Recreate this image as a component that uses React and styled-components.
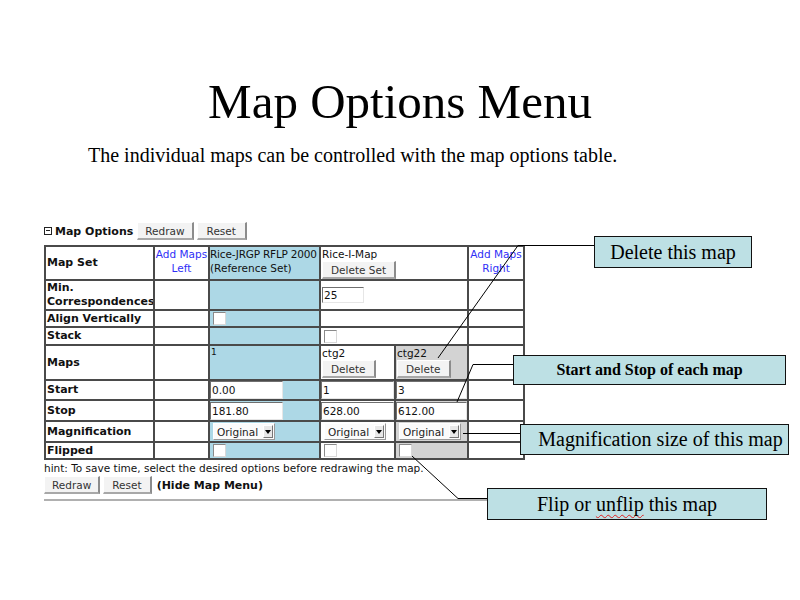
import styled, { createGlobalStyle } from "styled-components";

const GlobalStyle = createGlobalStyle`
  html, body {
    margin: 0;
    padding: 0;
    background: #fff;
  }
`;

const Slide = styled.div`
  position: relative;
  width: 800px;
  height: 600px;
  overflow: hidden;
  background: #fff;
  color: #000;
  font-family: "Liberation Serif", "Times New Roman", serif;
`;

const Title = styled.h1`
  margin: 78px 0 0;
  font-size: 49px;
  font-weight: normal;
  line-height: 48px;
  text-align: center;
`;

const Subtitle = styled.p`
  margin: 19px 0 0 88px;
  font-size: 20px;
  line-height: 20px;
`;

const Panel = styled.div`
  margin: 57px 0 0 44px;
  width: 479px;
  font-family: "DejaVu Sans", sans-serif;
  font-size: 10.5px;
  color: #111;
`;

const PanelHeader = styled.div`
  display: flex;
  align-items: center;
  height: 18px;
`;

const Toggle = styled.span`
  position: relative;
  box-sizing: border-box;
  width: 8px;
  height: 8px;
  border: 1px solid #222;
  margin-right: 3px;

  &::after {
    content: "";
    position: absolute;
    left: 1px;
    right: 1px;
    top: 2px;
    height: 1px;
    background: #222;
  }
`;

const PanelTitle = styled.b`
  font-size: 11px;
  margin-right: 4px;
`;

const Button = styled.button`
  box-sizing: border-box;
  height: ${(p) => p.$h || 18}px;
  margin: 0 ${(p) => p.$gap ?? 3}px 0 0;
  padding: 0 ${(p) => p.$pad ?? 7}px;
  font-family: "DejaVu Sans", sans-serif;
  font-size: 10.5px;
  color: #333;
  background: #f3f3f3;
  border-style: solid;
  border-width: 1px 2px 2px 1px;
  border-color: #fff #8c8c8c #a8a8a8 #fff;
  white-space: nowrap;
`;

const OptionsTable = styled.table`
  margin-top: 5px;
  width: 479px;
  table-layout: fixed;
  border-collapse: separate;
  border-spacing: 0;
  border: 1px solid #4a4a4a;
`;

const Col = styled.col`
  width: ${(p) => p.$w}px;
`;

const Row = styled.tr`
  height: ${(p) => p.$h}px;
`;

const tones = {
  blue: "#add8e6",
  gray: "#d3d3d3",
  white: "#fff",
};

const Cell = styled.td`
  box-sizing: border-box;
  padding: 0 ${(p) => p.$pad ?? 1}px;
  border: 1px solid #4a4a4a;
  background: ${(p) => tones[p.$tone || "white"]};
  vertical-align: ${(p) => p.$valign || "middle"};
  text-align: ${(p) => (p.$center ? "center" : "left")};
  line-height: 14px;
  white-space: nowrap;
  overflow: hidden;
`;

const Label = styled(Cell).attrs({ as: "th" })`
  font-weight: bold;
  font-size: 11px;
  white-space: normal;
`;

const AddLink = styled.span`
  display: block;
  color: #2f2ff6;
  white-space: normal;
`;

const CellText = styled.div`
  font-size: ${(p) => p.$size || 10.5}px;
  line-height: ${(p) => p.$lh || 14}px;
  letter-spacing: ${(p) => p.$tight || 0}px;
`;

const TextBox = styled.input`
  box-sizing: border-box;
  display: block;
  width: ${(p) => p.$w}px;
  height: ${(p) => p.$h || 18}px;
  margin: 0;
  padding: 0 1px;
  font-family: "DejaVu Sans", sans-serif;
  font-size: 10.5px;
  color: #111;
  background: #fff;
  border-style: solid;
  border-width: 1px;
  border-color: #6f6f6f #e6e6e6 #e6e6e6 #6f6f6f;
  outline: none;
`;

const Check = styled.span`
  box-sizing: border-box;
  display: block;
  width: 13px;
  height: 13px;
  margin-left: 2px;
  background: #fff;
  border: 1px solid;
  border-color: #8a8a8a #d8d8d8 #d8d8d8 #8a8a8a;
`;

const Select = styled.span`
  box-sizing: border-box;
  display: flex;
  align-items: center;
  justify-content: space-between;
  width: 62px;
  height: 17px;
  margin-left: 2px;
  padding: 0 1px 0 3px;
  background: #fbfbfb;
  border: 1px solid;
  border-color: #fff #999 #999 #fff;
  font-size: 10.5px;
  color: #222;
`;

const SelectArrow = styled.span`
  display: flex;
  align-items: center;
  justify-content: center;
  box-sizing: border-box;
  width: 10px;
  height: 13px;
  background: #e8e8e8;
  border: 1px solid;
  border-color: #fff #777 #777 #fff;

  &::after {
    content: "";
    border-left: 3px solid transparent;
    border-right: 3px solid transparent;
    border-top: 4px solid #000;
  }
`;

const Hint = styled.div`
  margin-top: 2px;
  line-height: 13px;
`;

const Footer = styled.div`
  display: flex;
  align-items: center;
  margin-top: 1px;
`;

const HideLink = styled.b`
  font-size: 11px;
  margin-left: 2px;
`;

const Rule = styled.div`
  margin-top: 5px;
  height: 2px;
  background: #b0b0b0;
`;

const Leaders = styled.svg`
  position: absolute;
  left: 0;
  top: 0;
  pointer-events: none;
`;

const Callout = styled.div`
  position: absolute;
  left: ${(p) => p.$x}px;
  top: ${(p) => p.$y}px;
  box-sizing: border-box;
  width: ${(p) => p.$w}px;
  height: ${(p) => p.$h}px;
  display: flex;
  align-items: center;
  justify-content: center;
  padding-left: ${(p) => p.$shift || 0}px;
  background: #bde0e4;
  border: 1px solid #111;
  font-size: ${(p) => (p.$bold ? 16 : 20)}px;
  font-weight: ${(p) => (p.$bold ? "bold" : "normal")};
  white-space: nowrap;
`;

const Misspelled = styled.span`
  text-decoration: underline wavy #e02020;
  text-decoration-thickness: 1px;
  text-decoration-skip-ink: none;
  text-underline-offset: 3px;
`;

const MapSelect = () => (
  <Select>
    Original
    <SelectArrow />
  </Select>
);

function App() {
  return (
    <>
      <GlobalStyle />
      <Slide>
        <Title>Map Options Menu</Title>
        <Subtitle>The individual maps can be controlled with the map options table.</Subtitle>

        <Panel>
          <PanelHeader>
            <Toggle />
            <PanelTitle>Map Options</PanelTitle>
            <Button>Redraw</Button>
            <Button $pad={9}>Reset</Button>
          </PanelHeader>

          <OptionsTable>
            <colgroup>
              <Col $w={109} />
              <Col $w={55} />
              <Col $w={111} />
              <Col $w={75} />
              <Col $w={73} />
              <Col $w={56} />
            </colgroup>
            <tbody>
              <Row $h={34}>
                <Label>Map Set</Label>
                <Cell $center $valign="top" $pad={0}>
                  <AddLink>Add Maps Left</AddLink>
                </Cell>
                <Cell $tone="blue" $valign="top" $pad={0}>
                  <CellText $tight={-0.2}>Rice-JRGP RFLP 2000</CellText>
                  <CellText>(Reference Set)</CellText>
                </Cell>
                <Cell colSpan={2} $valign="top">
                  <CellText>Rice-I-Map</CellText>
                  <Button $h={18} $pad={8}>Delete Set</Button>
                </Cell>
                <Cell $center $valign="top" $pad={0}>
                  <AddLink>Add Maps Right</AddLink>
                </Cell>
              </Row>
              <Row $h={30}>
                <Label>Min. Correspondences</Label>
                <Cell />
                <Cell $tone="blue" />
                <Cell colSpan={2}>
                  <TextBox readOnly defaultValue="25" $w={42} $h={16} />
                </Cell>
                <Cell />
              </Row>
              <Row $h={17}>
                <Label>Align Vertically</Label>
                <Cell />
                <Cell $tone="blue">
                  <Check />
                </Cell>
                <Cell colSpan={2} />
                <Cell />
              </Row>
              <Row $h={18}>
                <Label>Stack</Label>
                <Cell />
                <Cell $tone="blue" />
                <Cell colSpan={2}>
                  <Check />
                </Cell>
                <Cell />
              </Row>
              <Row $h={35}>
                <Label>Maps</Label>
                <Cell />
                <Cell $tone="blue" $valign="top">
                  <CellText $size={9} $lh={12}>1</CellText>
                </Cell>
                <Cell $valign="top">
                  <CellText>ctg2</CellText>
                  <Button $pad={8}>Delete</Button>
                </Cell>
                <Cell $tone="gray" $valign="top">
                  <CellText>ctg22</CellText>
                  <Button $pad={8}>Delete</Button>
                </Cell>
                <Cell />
              </Row>
              <Row $h={20}>
                <Label>Start</Label>
                <Cell />
                <Cell $tone="blue" $pad={0}>
                  <TextBox readOnly defaultValue="0.00" $w={73} />
                </Cell>
                <Cell $pad={0}>
                  <TextBox readOnly defaultValue="1" $w={73} />
                </Cell>
                <Cell $tone="gray" $pad={0}>
                  <TextBox readOnly defaultValue="3" $w={71} />
                </Cell>
                <Cell />
              </Row>
              <Row $h={21}>
                <Label>Stop</Label>
                <Cell />
                <Cell $tone="blue" $pad={0}>
                  <TextBox readOnly defaultValue="181.80" $w={73} />
                </Cell>
                <Cell $pad={0}>
                  <TextBox readOnly defaultValue="628.00" $w={73} />
                </Cell>
                <Cell $tone="gray" $pad={0}>
                  <TextBox readOnly defaultValue="612.00" $w={71} />
                </Cell>
                <Cell />
              </Row>
              <Row $h={21}>
                <Label>Magnification</Label>
                <Cell />
                <Cell $tone="blue">
                  <MapSelect />
                </Cell>
                <Cell>
                  <MapSelect />
                </Cell>
                <Cell $tone="gray">
                  <MapSelect />
                </Cell>
                <Cell />
              </Row>
              <Row $h={17}>
                <Label>Flipped</Label>
                <Cell />
                <Cell $tone="blue">
                  <Check />
                </Cell>
                <Cell>
                  <Check />
                </Cell>
                <Cell $tone="gray">
                  <Check />
                </Cell>
                <Cell />
              </Row>
            </tbody>
          </OptionsTable>

          <Hint>hint: To save time, select the desired options before redrawing the map.</Hint>
          <Footer>
            <Button>Redraw</Button>
            <Button $pad={8}>Reset</Button>
            <HideLink>(Hide Map Menu)</HideLink>
          </Footer>
          <Rule />
        </Panel>

        <Leaders width="800" height="600" viewBox="0 0 800 600">
          <g fill="none" stroke="#000" strokeWidth="1">
            <polyline points="594,245.5 518,245.5 438,358" />
            <polyline points="513,364.5 473,364.5 457,402" />
            <polyline points="463,433.5 520,433.5" />
            <polyline points="412,456 458,498.5 487,498.5" />
          </g>
        </Leaders>

        <Callout $x={594} $y={236} $w={158} $h={32}>
          Delete this map
        </Callout>
        <Callout $x={513} $y={355} $w={273} $h={30} $bold>
          Start and Stop of each map
        </Callout>
        <Callout $x={520} $y={424} $w={269} $h={31} $shift={12}>
          Magnification size of this map
        </Callout>
        <Callout $x={487} $y={488} $w={280} $h={32}>
          <span>
            Flip or <Misspelled>unflip</Misspelled> this map
          </span>
        </Callout>
      </Slide>
    </>
  );
}

export default App;
